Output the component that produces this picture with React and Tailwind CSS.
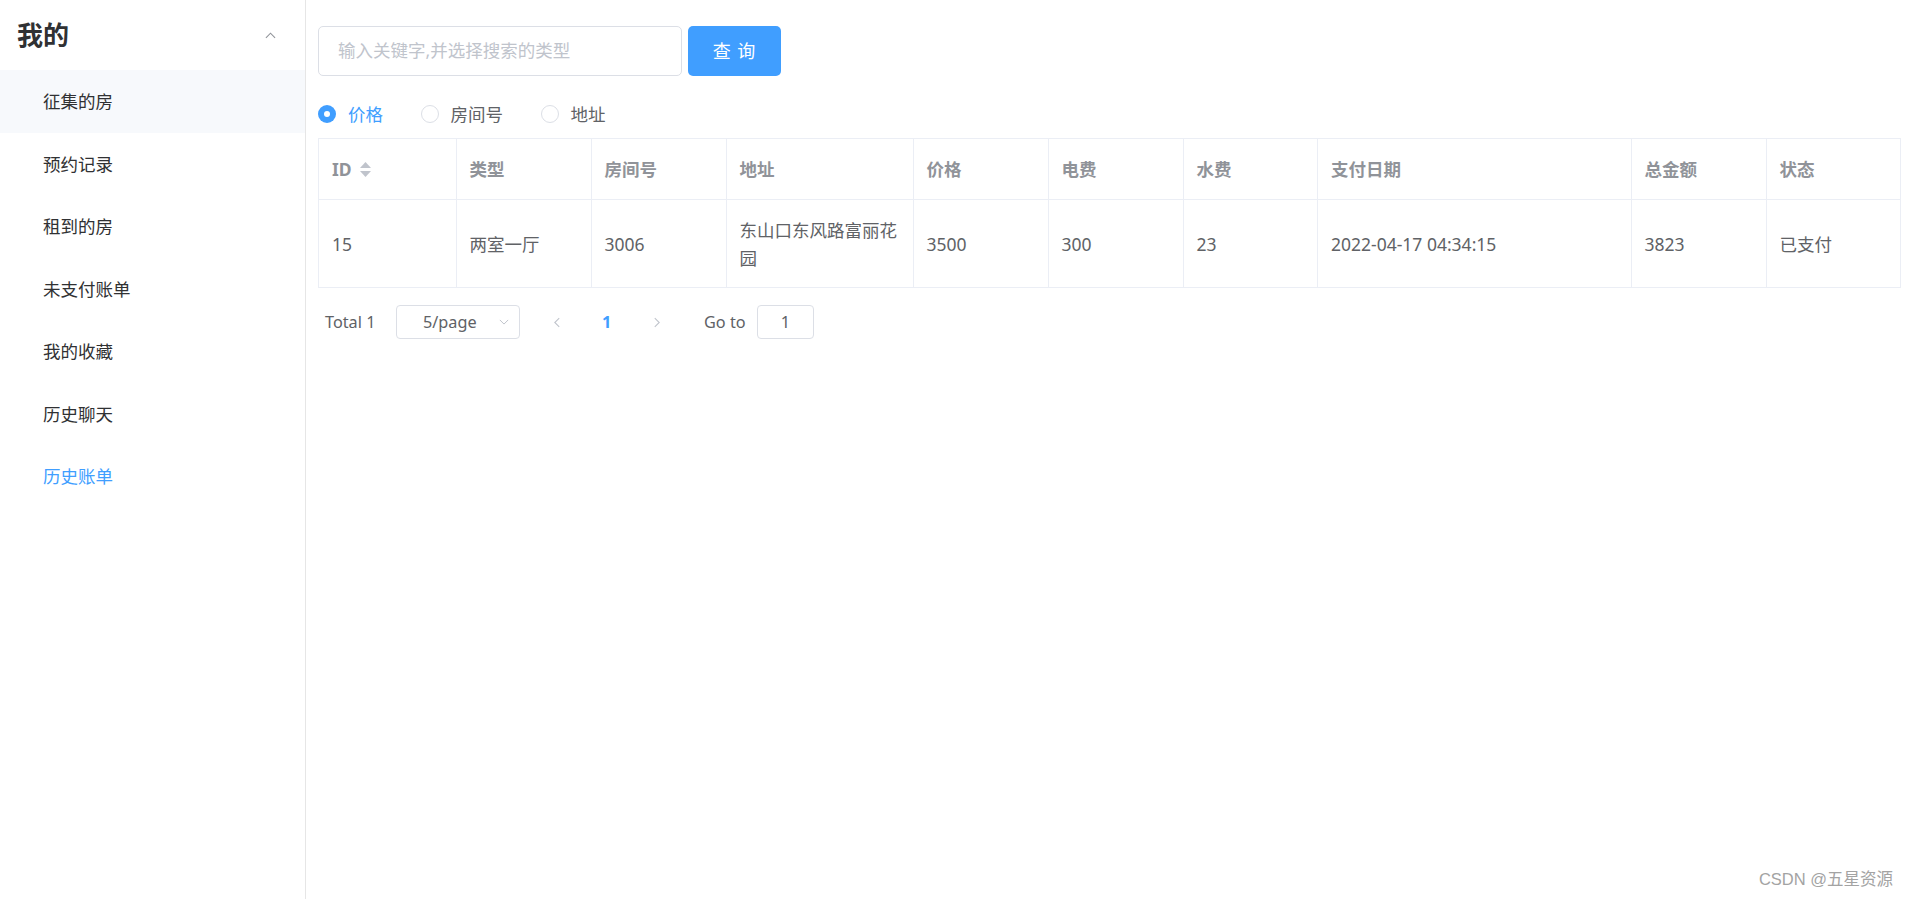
import React from "react";

const menu = ["征集的房", "预约记录", "租到的房", "未支付账单", "我的收藏", "历史聊天", "历史账单"];

const cols = [
  { w: 137.5, h: "ID", v: "15", sort: true },
  { w: 135, h: "类型", v: "两室一厅" },
  { w: 135, h: "房间号", v: "3006" },
  { w: 187, h: "地址", v: "东山口东风路富丽花园" },
  { w: 135, h: "价格", v: "3500" },
  { w: 135, h: "电费", v: "300" },
  { w: 134.5, h: "水费", v: "23" },
  { w: 313.5, h: "支付日期", v: "2022-04-17 04:34:15" },
  { w: 135, h: "总金额", v: "3823" },
  { w: 134.5, h: "状态", v: "已支付" },
];

function Chevron({ dir = "left", className = "" }) {
  const d =
    dir === "left"
      ? "M7 1 L2 6 L7 11"
      : dir === "right"
      ? "M2 1 L7 6 L2 11"
      : dir === "up"
      ? "M1 6 L6 1 L11 6"
      : "M1 1 L6 6 L11 1";
  const vb = dir === "left" || dir === "right" ? "0 0 9 12" : "0 0 12 7";
  return (
    <svg viewBox={vb} className={className} fill="none" stroke="currentColor" strokeWidth="1.2">
      <path d={d} />
    </svg>
  );
}

function Radio({ label, checked }) {
  return (
    <label className="flex items-center mr-[37.5px]">
      {checked ? (
        <span className="w-[18px] h-[18px] rounded-full bg-[#409eff] flex items-center justify-center">
          <span className="w-[6px] h-[6px] rounded-full bg-white" />
        </span>
      ) : (
        <span className="w-[18px] h-[18px] rounded-full border border-[#dcdfe6] bg-white" />
      )}
      <span className={`pl-[12px] text-[17.5px] ${checked ? "text-[#409eff]" : "text-[#606266]"}`}>{label}</span>
    </label>
  );
}

export default function App() {
  return (
    <div className="relative flex h-[899px] w-[1910px] bg-white font-['Noto_Sans','Noto_Sans_CJK_SC',sans-serif] overflow-hidden">
      {/* Sidebar */}
      <aside className="w-[306px] shrink-0 border-r border-[#e6e6e6] h-full">
        <div className="h-[70px] flex items-center justify-between pl-[17px] pr-[29px]">
          <span className="text-[26px] font-bold text-[#303133] leading-none">我的</span>
          <Chevron dir="up" className="w-[11px] h-[7px] text-[#909399]" />
        </div>
        <ul>
          {menu.map((m, i) => (
            <li
              key={m}
              className={`h-[62.5px] flex items-center pl-[43px] text-[17.5px] ${
                i === 0 ? "bg-[#f7f9fc]" : ""
              } ${i === menu.length - 1 ? "text-[#409eff]" : "text-[#303133]"}`}
            >
              {m}
            </li>
          ))}
        </ul>
      </aside>

      {/* Main */}
      <main className="flex-1 pl-[12px] pr-[10px] pt-[25px]">
        <div className="flex items-center gap-[6px]">
          <div className="w-[364px] h-[50px] border border-[#dcdfe6] rounded-[5px] flex items-center pl-[19px] text-[17.5px] text-[#c0c4cc]">
            输入关键字,并选择搜索的类型
          </div>
          <button className="w-[93px] h-[50px] rounded-[5px] bg-[#409eff] text-white text-[18px] tracking-[1px] mt-[1px]">
            查 询
          </button>
        </div>

        <div className="flex items-center h-[30px] mt-[23px]">
          <Radio label="价格" checked />
          <Radio label="房间号" />
          <Radio label="地址" />
        </div>

        <table className="mt-[9px] border-collapse table-fixed w-[1582px] border border-[#ebeef5]">
          <colgroup>
            {cols.map((c, i) => (
              <col key={i} style={{ width: c.w }} />
            ))}
          </colgroup>
          <thead>
            <tr>
              {cols.map((c, i) => (
                <th
                  key={i}
                  className="h-[61px] border border-[#ebeef5] text-left font-bold text-[17.5px] text-[#909399] px-[13px] align-middle"
                >
                  <span className="flex items-center">
                    {c.h}
                    {c.sort && (
                      <span className="ml-[8px] flex flex-col gap-[3px]">
                        <svg viewBox="0 0 11 6" className="w-[11px] h-[6px]">
                          <path d="M5.5 0 L11 6 L0 6 Z" fill="#c0c4cc" />
                        </svg>
                        <svg viewBox="0 0 11 6" className="w-[11px] h-[6px]">
                          <path d="M0 0 L11 0 L5.5 6 Z" fill="#c0c4cc" />
                        </svg>
                      </span>
                    )}
                  </span>
                </th>
              ))}
            </tr>
          </thead>
          <tbody>
            <tr>
              {cols.map((c, i) => (
                <td
                  key={i}
                  className="h-[88px] border border-[#ebeef5] text-left text-[17.5px] leading-[28px] text-[#606266] px-[13px] align-middle"
                >
                  {c.v}
                </td>
              ))}
            </tr>
          </tbody>
        </table>

        <div className="flex items-center mt-[17px] h-[34px] text-[16.25px] text-[#606266]">
          <span className="ml-[7px] w-[71px] shrink-0">Total 1</span>
          <div className="w-[124px] h-[34px] border border-[#dcdfe6] rounded-[4px] flex items-center pl-[26px] pr-[10px] justify-between">
            <span>5/page</span>
            <Chevron dir="down" className="w-[10px] h-[6px] text-[#c0c4cc]" />
          </div>
          <Chevron dir="left" className="ml-[33px] w-[8px] h-[11px] text-[#c0c4cc]" />
          <span className="ml-[41px] w-[9px] font-bold text-[#409eff]">1</span>
          <Chevron dir="right" className="ml-[42px] w-[8px] h-[11px] text-[#c0c4cc]" />
          <span className="ml-[43px] w-[53px] shrink-0">Go to</span>
          <div className="w-[57px] h-[34px] border border-[#dcdfe6] rounded-[4px] flex items-center justify-center">
            1
          </div>
        </div>
      </main>

      <div className="absolute right-[17px] bottom-[7px] text-[16.5px] text-[#a3a3a3] font-['Liberation_Sans','Noto_Sans_CJK_SC',sans-serif]">
        CSDN @五星资源
      </div>
    </div>
  );
}
